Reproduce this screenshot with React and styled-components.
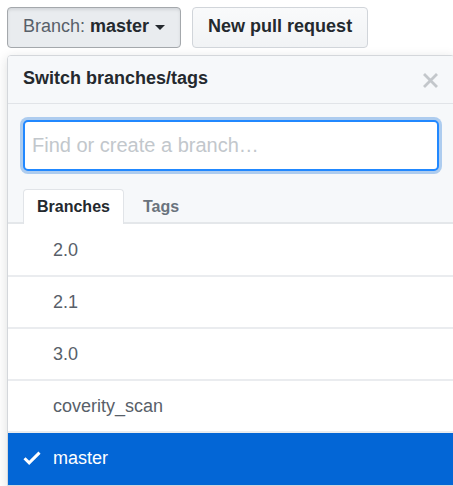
import React, { useState } from 'react';
import styled, { createGlobalStyle } from 'styled-components';

const BRANCHES = ['2.0', '2.1', '3.0', 'coverity_scan', 'master'];

const GlobalStyle = createGlobalStyle`
    html, body {
        margin: 0;
        padding: 0;
        background: #fff;
        overflow: hidden;
    }
    body {
        font-family: "Liberation Sans", Arial, sans-serif;
        color: #24292e;
    }
`;

const Page = styled.div`
    padding: 7px 0 0 7px;
`;

const Toolbar = styled.div`
    display: flex;
    gap: 11px;
`;

const Button = styled.button`
    display: flex;
    align-items: center;
    box-sizing: border-box;
    height: 41px;
    padding: 0 15px 2px;
    font-family: inherit;
    font-size: 18px;
    line-height: 27px;
    font-weight: ${(p) => (p.$selected ? 400 : 700)};
    color: #24292e;
    border-radius: 4px;
    cursor: pointer;
    border: 1px solid ${(p) => (p.$selected ? '#a4a8ac' : '#d1d5da')};
    background: ${(p) =>
        p.$selected ? '#e9ecef' : 'linear-gradient(#f9fafb, #f1f3f5)'};
    box-shadow: ${(p) =>
        p.$selected ? 'inset 0 2px 3px rgba(27, 31, 35, 0.1)' : 'none'};
`;

const Muted = styled.span`
    color: #586069;
    margin-right: 5px;
`;

const Strong = styled.strong`
    font-weight: 700;
    color: #24292e;
`;

const Caret = styled.span`
    margin-left: 6px;
    margin-top: 1px;
    width: 0;
    height: 0;
    border-left: 5.5px solid transparent;
    border-right: 5.5px solid transparent;
    border-top: 5.5px solid #24292e;
`;

const Menu = styled.div`
    box-sizing: border-box;
    width: 448px;
    margin-top: 7px;
    border: 1px solid #d4d7db;
    border-radius: 4px 4px 0 0;
    background: #fff;
    box-shadow: 0 3px 12px rgba(27, 31, 35, 0.15);
    overflow: hidden;
`;

const Header = styled.div`
    display: flex;
    justify-content: space-between;
    padding: 9px 16px 11px 15px;
    background: #f6f8fa;
    border-bottom: 1px solid #e1e4e8;
`;

const Title = styled.span`
    font-size: 18px;
    line-height: 27px;
    font-weight: 700;
    color: #24292e;
`;

const Close = styled.button`
    align-self: center;
    margin-top: 4px;
    padding: 0;
    border: 0;
    background: none;
    display: flex;
    cursor: pointer;
`;

const Filter = styled.div`
    padding: 16px 15px 18px;
    background: #f6f8fa;
`;

const Input = styled.input`
    box-sizing: border-box;
    display: block;
    width: 100%;
    height: 51px;
    padding: 0 7px;
    font-family: inherit;
    font-size: 20px;
    color: #24292e;
    background: #fff;
    border: 2px solid #2188ff;
    border-radius: 5px;
    outline: none;
    box-shadow: 0 0 0 3px rgba(3, 102, 214, 0.3);

    &::placeholder {
        color: #c2c7cc;
    }
`;

const TabNav = styled.div`
    display: flex;
    padding-left: 15px;
    background: #f6f8fa;
    border-bottom: 2px solid #e4e7ea;
`;

const Tab = styled.button`
    margin-bottom: -2px;
    margin-left: ${(p) => (p.$active ? 0 : 5)}px;
    padding: 7px 13px 7px;
    font-family: inherit;
    font-size: 16px;
    line-height: 20px;
    font-weight: 700;
    cursor: pointer;
    color: ${(p) => (p.$active ? '#24292e' : '#6a737d')};
    background: ${(p) => (p.$active ? '#fff' : 'transparent')};
    border: 1px solid ${(p) => (p.$active ? '#e1e4e8' : 'transparent')};
    border-bottom: 0;
    border-radius: 4px 4px 0 0;
`;

const List = styled.div`
    display: flex;
    flex-direction: column;
    padding-top: 1px;
`;

const Item = styled.div`
    display: flex;
    align-items: center;
    gap: 12px;
    height: 50px;
    padding-left: 15px;
    font-size: 18px;
    color: ${(p) => (p.$selected ? '#fff' : '#586069')};
    background: ${(p) => (p.$selected ? '#0366d6' : '#fff')};
    border-bottom: 2px solid ${(p) => (p.$selected ? '#0366d6' : '#eaecef')};
    cursor: pointer;
`;

const IconSlot = styled.span`
    display: flex;
    width: 18px;
    height: 14px;
`;

function CloseIcon() {
    return (
        <svg width="15" height="15" viewBox="0 0 15 15">
            <path
                d="M2 2 L13 13 M13 2 L2 13"
                stroke="#c3c7cb"
                strokeWidth="2.8"
                strokeLinecap="square"
                fill="none"
            />
        </svg>
    );
}

function CheckIcon() {
    return (
        <svg width="18" height="14" viewBox="0 0 18 14">
            <path
                d="M1.5 7.2 L6.2 11.8 L16.5 1.6"
                stroke="#fff"
                strokeWidth="3"
                fill="none"
            />
        </svg>
    );
}

export default function App() {
    const [current, setCurrent] = useState('master');
    const [tab, setTab] = useState('branches');

    return (
        <Page>
            <GlobalStyle />
            <Toolbar>
                <Button $selected>
                    <Muted>Branch:</Muted>
                    <Strong>{current}</Strong>
                    <Caret />
                </Button>
                <Button>New pull request</Button>
            </Toolbar>
            <Menu>
                <Header>
                    <Title>Switch branches/tags</Title>
                    <Close aria-label="Close">
                        <CloseIcon />
                    </Close>
                </Header>
                <Filter>
                    <Input placeholder="Find or create a branch…" />
                </Filter>
                <TabNav>
                    <Tab $active={tab === 'branches'} onClick={() => setTab('branches')}>
                        Branches
                    </Tab>
                    <Tab $active={tab === 'tags'} onClick={() => setTab('tags')}>
                        Tags
                    </Tab>
                </TabNav>
                <List>
                    {BRANCHES.map((name) => (
                        <Item
                            key={name}
                            $selected={name === current}
                            onClick={() => setCurrent(name)}
                        >
                            <IconSlot>{name === current && <CheckIcon />}</IconSlot>
                            {name}
                        </Item>
                    ))}
                </List>
            </Menu>
        </Page>
    );
}
